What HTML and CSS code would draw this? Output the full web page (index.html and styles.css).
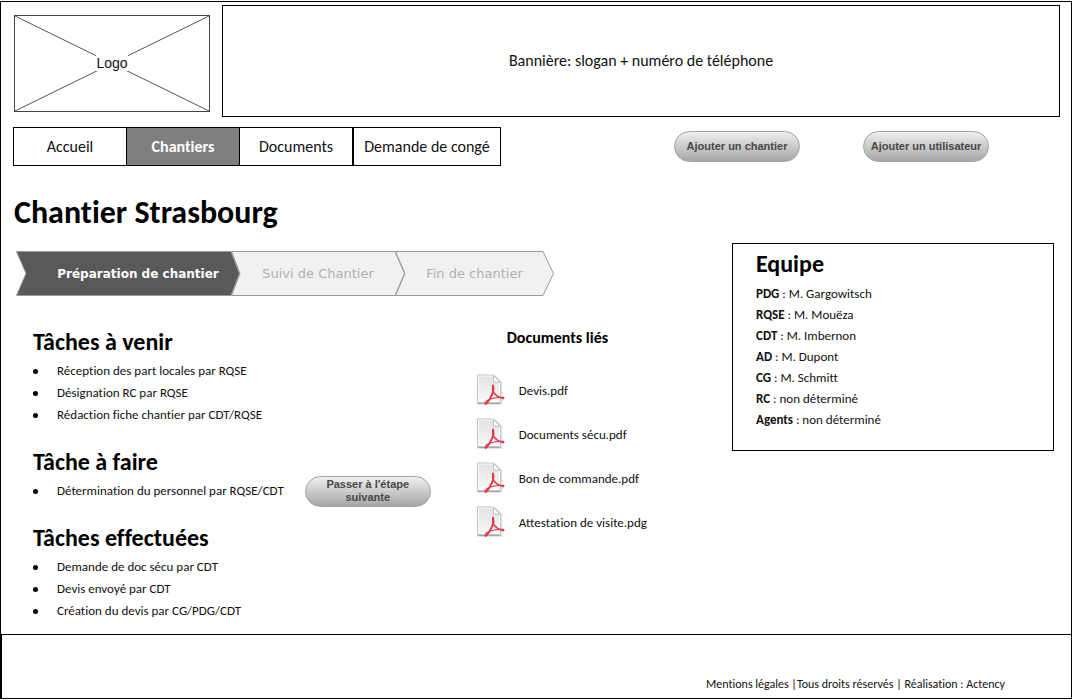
FILE: index.html
```html
<!DOCTYPE html>
<html lang="fr">
<head>
<meta charset="utf-8">
<meta name="viewport" content="width=device-width, initial-scale=1">
<title>Chantier Strasbourg</title>
<link rel="stylesheet" href="styles.css">
</head>
<body>
<svg class="sprite" aria-hidden="true">
  <defs>
    <linearGradient id="sheet" x1="0" y1="0" x2="0" y2="1">
      <stop offset="0" stop-color="#e2e3e4"/>
      <stop offset="1" stop-color="#f7f7f7"/>
    </linearGradient>
    <symbol id="pdf" viewBox="0 0 30 32">
      <path d="M3 2H19.500L26.500 8.500V30H3Z" fill="none" stroke="#e6e6e6" stroke-width="2" stroke-linejoin="round"/>
      <path d="M2.500 1H18.500L25.500 8V28.500H2.500Z" fill="#fff" stroke="#c2c2c2" stroke-linejoin="round"/>
      <path d="M4 2.500H18L24 8.500V27H4Z" fill="url(#sheet)"/>
      <path d="M18.500 1.500V8H25Z" fill="#fff" stroke="#bdbdbd"/>
      <path d="M2.500 29.500H25.500" stroke="#a8a8a8"/>
      <g fill="none" stroke="#e5364a" stroke-linecap="round" stroke-linejoin="round">
        <path d="M18 11.500C17.300 14 18 17.500 19.300 19.500C21.500 22 24 23.500 28.500 24.500" stroke-width="1.600"/>
        <path d="M18 11.500C19.600 15 17.500 20.500 14.500 25.500C12.800 28.100 11.500 30 10.500 30" stroke-width="1.800"/>
        <path d="M10.500 30C9.500 28.500 11.500 26.500 15 25C18.500 24 23.500 23 28.500 23.300" stroke-width="1.200"/>
        <path d="M28.500 23.300V24.500" stroke-width="1.300"/>
      </g>
    </symbol>
  </defs>
</svg>
<div class="page">
  <header class="header">
    <div class="logo">
      <svg class="logo-cross" viewBox="0 0 194 95" preserveAspectRatio="none" aria-hidden="true">
        <path d="M0 0L194 95M194 0L0 95"/>
      </svg>
      <span class="logo-text">Logo</span>
    </div>
    <div class="banner">Bannière: slogan + numéro de téléphone</div>
  </header>

  <div class="toolbar">
    <nav class="nav">
      <a class="nav-link" href="#">Accueil</a>
      <a class="nav-link nav-link-active" href="#" aria-current="page">Chantiers</a>
      <a class="nav-link" href="#">Documents</a>
      <a class="nav-link nav-link-wide" href="#">Demande de congé</a>
    </nav>
    <div class="actions">
      <button class="pill" type="button">Ajouter un chantier</button>
      <button class="pill" type="button">Ajouter un utilisateur</button>
    </div>
  </div>

  <main class="main">
    <div class="content">
      <h1 class="title">Chantier Strasbourg</h1>
      <ol class="steps">
        <li class="step step-current" aria-current="step">
          <svg class="step-shape" viewBox="0 0 224 45" preserveAspectRatio="none" aria-hidden="true"><path d="M.5.5H215L223.500 22.500L215 44.500H.5L10 22.500Z"/></svg>
          <span class="step-label">Préparation de chantier</span>
        </li>
        <li class="step step-second">
          <svg class="step-shape" viewBox="0 0 174 45" preserveAspectRatio="none" aria-hidden="true"><path d="M.5.5H164L173.500 22.500L164 44.500H.5L9 22.500Z"/></svg>
          <span class="step-label">Suivi de Chantier</span>
        </li>
        <li class="step step-third">
          <svg class="step-shape" viewBox="0 0 159 45" preserveAspectRatio="none" aria-hidden="true"><path d="M.5.5H148L158.500 22.500L148 44.500H.5L10 22.500Z"/></svg>
          <span class="step-label">Fin de chantier</span>
        </li>
      </ol>
      <div class="columns">
        <div class="tasks">
          <section class="task-group">
            <h2 class="heading">Tâches à venir</h2>
            <ul class="task-list">
              <li class="task">Réception des part locales par RQSE</li>
              <li class="task">Désignation RC par RQSE</li>
              <li class="task">Rédaction fiche chantier par CDT/RQSE</li>
            </ul>
          </section>
          <section class="task-group">
            <h2 class="heading">Tâche à faire</h2>
            <div class="task-row">
              <ul class="task-list">
                <li class="task">Détermination du personnel par RQSE/CDT</li>
              </ul>
              <button class="pill" type="button">Passer à l'étape suivante</button>
            </div>
          </section>
          <section class="task-group">
            <h2 class="heading">Tâches effectuées</h2>
            <ul class="task-list">
              <li class="task">Demande de doc sécu par CDT</li>
              <li class="task">Devis envoyé par CDT</li>
              <li class="task">Création du devis par CG/PDG/CDT</li>
            </ul>
          </section>
        </div>
        <section class="documents">
          <h3 class="documents-title">Documents liés</h3>
          <ul class="document-list">
            <li><a class="document" href="#"><svg class="document-icon" aria-hidden="true"><use href="#pdf"/></svg>Devis.pdf</a></li>
            <li><a class="document" href="#"><svg class="document-icon" aria-hidden="true"><use href="#pdf"/></svg>Documents sécu.pdf</a></li>
            <li><a class="document" href="#"><svg class="document-icon" aria-hidden="true"><use href="#pdf"/></svg>Bon de commande.pdf</a></li>
            <li><a class="document" href="#"><svg class="document-icon" aria-hidden="true"><use href="#pdf"/></svg>Attestation de visite.pdg</a></li>
          </ul>
        </section>
      </div>
    </div>
    <aside class="team">
      <h2 class="heading">Equipe</h2>
      <ul class="team-list">
        <li><strong>PDG</strong> : M. Gargowitsch</li>
        <li><strong>RQSE</strong> : M. Mouëza</li>
        <li><strong>CDT</strong> : M. Imbernon</li>
        <li><strong>AD</strong> : M. Dupont</li>
        <li><strong>CG</strong> : M. Schmitt</li>
        <li><strong>RC</strong> : non déterminé</li>
        <li><strong>Agents</strong> : non déterminé</li>
      </ul>
    </aside>
  </main>

  <footer class="footer">
    <p class="legal"><a href="#">Mentions légales</a> |Tous droits réservés | Réalisation : <a href="#">Actency</a></p>
  </footer>
</div>
</body>
</html>
```

FILE: styles.css
```css
* {
  box-sizing: border-box;
}

body {
  margin: 0;
  background: #fff;
  color: #111;
  font: 13px/21px Carlito, Lato, sans-serif;
  font-variant-ligatures: none;
}

h1, h2, h3, p, ul, ol {
  margin: 0;
  padding: 0;
}

ul, ol {
  list-style: none;
}

a {
  color: inherit;
  text-decoration: none;
}

.sprite {
  position: absolute;
  width: 0;
  height: 0;
}

.page {
  display: flex;
  flex-direction: column;
  min-height: calc(100vh - 2px);
  margin: 1px 0;
  border: 1px solid #000;
}

/* Header */

.header {
  display: flex;
  align-items: center;
  gap: 12px;
  padding: 3px 11px 0 13px;
}

.logo {
  position: relative;
  display: grid;
  place-items: center;
  width: 196px;
  height: 97px;
  margin-bottom: -4px;
  border: 1px solid #444;
  font: 14px/16px "Liberation Sans", Arial, sans-serif;
}

.logo-cross {
  position: absolute;
  inset: 0;
  width: 100%;
  height: 100%;
  fill: none;
  stroke: #555;
}

.logo-text {
  position: relative;
  background: #fff;
}

.banner {
  flex: 1;
  display: grid;
  place-items: center;
  min-height: 112px;
  padding-bottom: 2px;
  border: 1px solid #000;
  font-size: 16px;
}

/* Navigation */

.toolbar {
  display: flex;
  align-items: center;
  justify-content: space-between;
  padding: 10px 82px 0 12px;
}

.nav {
  display: flex;
  border: 1px solid #000;
  font-size: 16px;
}

.nav-link {
  width: 113px;
  padding: 8px 0;
  border-right: 1px solid #000;
  text-align: center;
}

.nav-link-active {
  background: #7f7f7f;
  color: #fff;
  font-weight: bold;
}

.nav-link-wide {
  width: 147px;
  border-right: 0;
  border-left: 1px solid #000;
}

.actions {
  display: flex;
  gap: 63px;
}

.pill {
  width: 126px;
  height: 31px;
  padding: 0 8px;
  border: 1px solid #a3a3a3;
  border-radius: 16px;
  background: linear-gradient(#efefef, #a6a6a6);
  color: #484848;
  font: bold 11px/13px "Liberation Sans", Arial, sans-serif;
}

.actions .pill {
  padding: 0;
}

/* Main area */

.main {
  flex: 1;
  display: flex;
  align-items: flex-start;
  padding: 28px 17px 10px 13px;
}

.content {
  flex: 1;
}

.title {
  color: #000;
  font-size: 32px;
  line-height: 38px;
}

.steps {
  display: flex;
  margin: 19px 0 0 2px;
  font: 13px/16px "DejaVu Sans", Verdana, sans-serif;
  color: #b0b0b0;
}

.step {
  position: relative;
  display: grid;
  place-items: center;
  height: 45px;
}

.step-current {
  z-index: 1;
  width: 224px;
  padding-left: 20px;
  color: #fff;
  font-size: 12px;
  font-weight: bold;
}

.step-second {
  width: 174px;
  margin-left: -9px;
}

.step-third {
  width: 159px;
  margin-left: -10px;
}

.step-shape {
  position: absolute;
  inset: 0;
  width: 100%;
  height: 100%;
  fill: #f1f1f1;
  stroke: #999;
}

.step-current .step-shape {
  fill: #595959;
}

.step-label {
  position: relative;
}

.columns {
  display: flex;
  gap: 44px;
  padding: 32px 0 0 19px;
}

.tasks {
  display: flex;
  flex-direction: column;
  gap: 22px;
}

.heading {
  color: #000;
  font-size: 24px;
  line-height: 28px;
}

.task-list {
  margin-top: 4px;
}

.task {
  display: flex;
  align-items: center;
  gap: 19px;
  line-height: 22px;
}

.task::before {
  content: "";
  width: 5px;
  height: 5px;
  border-radius: 50%;
  background: #000;
}

.task-row {
  display: flex;
  align-items: center;
  gap: 21px;
  height: 22px;
  margin-top: 4px;
}

.task-row .task-list {
  margin-top: 0;
}

.documents-title {
  padding-left: 32px;
  color: #000;
  font-size: 16px;
  line-height: 20px;
}

.document-list {
  display: flex;
  flex-direction: column;
  gap: 12px;
  margin-top: 26px;
}

.document {
  display: flex;
  align-items: center;
  gap: 14px;
}

.document-icon {
  width: 30px;
  height: 32px;
}

/* Team */

.team {
  width: 322px;
  min-height: 208px;
  margin-top: 49px;
  padding: 6px 23px;
  border: 1px solid #000;
}

.team-list {
  margin-top: 5px;
}

/* Footer */

.footer {
  display: flex;
  align-items: flex-end;
  justify-content: flex-end;
  min-height: 64px;
  padding: 0 66px 3px 0;
  border-top: 1px solid #000;
  border-left: 1px solid #000;
  font-size: 12px;
}
```
